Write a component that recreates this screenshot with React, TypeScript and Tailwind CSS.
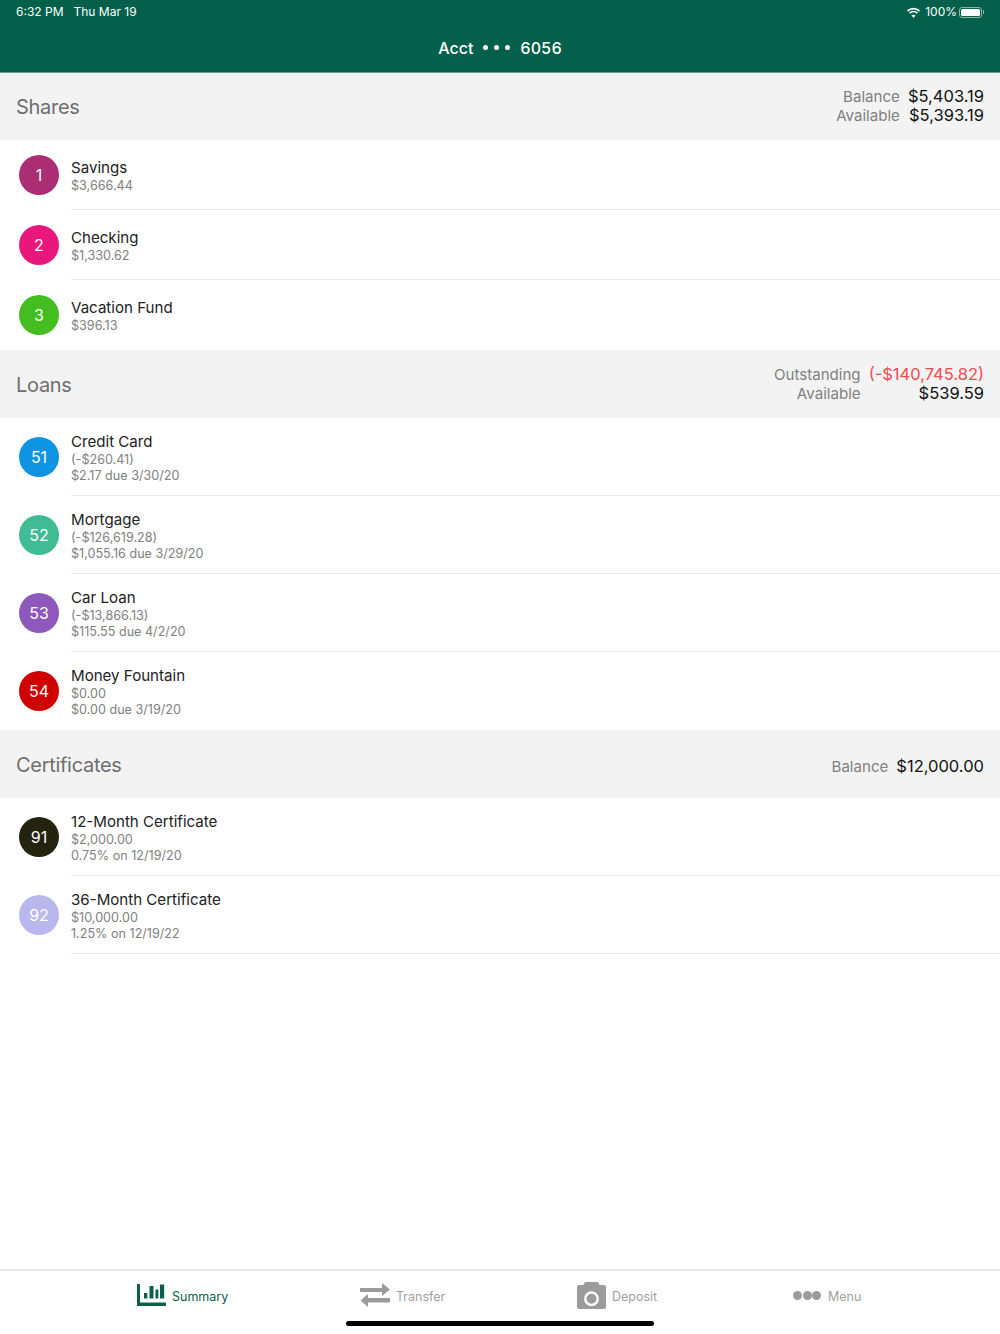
const font = { fontFamily: '"Inter", "Liberation Sans", sans-serif' };

type Account = { id: string; color: string; name: string; lines: string[]; last?: boolean };

const shares: Account[] = [
  { id: "1", color: "bg-[#ab2d73]", name: "Savings", lines: ["$3,666.44"] },
  { id: "2", color: "bg-[#e9177b]", name: "Checking", lines: ["$1,330.62"] },
  { id: "3", color: "bg-[#43bd1f]", name: "Vacation Fund", lines: ["$396.13"], last: true },
];

const loans: Account[] = [
  { id: "51", color: "bg-[#0f94e3]", name: "Credit Card", lines: ["(-$260.41)", "$2.17 due 3/30/20"] },
  { id: "52", color: "bg-[#41bb94]", name: "Mortgage", lines: ["(-$126,619.28)", "$1,055.16 due 3/29/20"] },
  { id: "53", color: "bg-[#8e58bd]", name: "Car Loan", lines: ["(-$13,866.13)", "$115.55 due 4/2/20"] },
  { id: "54", color: "bg-[#d00000]", name: "Money Fountain", lines: ["$0.00", "$0.00 due 3/19/20"], last: true },
];

const certificates: Account[] = [
  { id: "91", color: "bg-[#23230f]", name: "12-Month Certificate", lines: ["$2,000.00", "0.75% on 12/19/20"] },
  { id: "92", color: "bg-[#b9b8ee]", name: "36-Month Certificate", lines: ["$10,000.00", "1.25% on 12/19/22"] },
];

const Row = ({ a }: { a: Account }) => (
  <div className={`flex items-center pl-[19px] ${a.lines.length > 1 ? "h-[78px]" : "h-[70px]"}`}>
    <div
      className={`${a.color} w-10 h-10 rounded-full text-white flex items-center justify-center text-[16px] shrink-0`}
    >
      {a.id}
    </div>
    <div
      className={`ml-3 flex-1 h-full pt-px flex flex-col justify-center ${
        a.last ? "" : "border-b border-[#ebebeb]"
      }`}
    >
      <div className="text-[15.1px] leading-[21px] text-[#222222]">{a.name}</div>
      {a.lines.map((l) => (
        <div key={l} className="text-[12.6px] leading-[16px] text-[#808080]">
          {l}
        </div>
      ))}
    </div>
  </div>
);

const Section = ({ title, children }: { title: string; children: React.ReactNode }) => (
  <div className="h-[67px] bg-[#f3f3f3] flex items-center justify-between px-4">
    <div className="text-[20px] tracking-[-0.3px] text-[#6e6e6e]">{title}</div>
    <div className="text-[16.5px] leading-[19px] pb-[2px]">{children}</div>
  </div>
);

const Stat = ({ label, value, red }: { label: string; value: string; red?: boolean }) => (
  <>
    <div className="text-right text-[15.1px] text-[#808080]">{label}</div>
    <div className={`text-right ${red ? "text-[#f04a4f]" : "text-[#111111]"}`}>{value}</div>
  </>
);

const Tab = ({
  icon,
  label,
  active,
  className,
}: {
  icon: React.ReactNode;
  label: string;
  active?: boolean;
  className: string;
}) => (
  <div className={`flex items-center gap-[6px] absolute top-0 h-[48px] ${className}`}>
    {icon}
    <span className={`text-[12.5px] pt-[4px] ${active ? "text-[#0a6049]" : "text-[#a0a0a0]"}`}>{label}</span>
  </div>
);

export default function App() {
  return (
    <div className="w-[1000px] h-[1334px] bg-white flex flex-col overflow-hidden" style={font}>
      <div className="h-[73px] bg-[#04604a] border-b border-[#6d9c8f] flex flex-col text-white shrink-0">
        <div className="h-6 px-4 flex items-center justify-between text-[12px]">
          <div className="flex gap-[10px]">
            <span>6:32 PM</span>
            <span>Thu Mar 19</span>
          </div>
          <div className="flex items-center">
            <svg width="15" height="11" viewBox="0 0 14 11" fill="none" stroke="white" strokeWidth="1.7">
              <path d="M1 4 C4.5 0.8 9.5 0.8 13 4" />
              <path d="M3.2 6.2 C5.4 4.2 8.6 4.2 10.8 6.2" />
              <path d="M7 10.8 L4.9 8.4 C6.1 7.4 7.9 7.4 9.1 8.4 Z" fill="white" stroke="none" />
            </svg>
            <span className="ml-[4px]">100%</span>
            <div className="w-[23px] h-[11px] rounded-[3px] border border-[#8fb5aa] p-[1px] ml-[2px]">
              <div className="w-full h-full bg-white rounded-[1.5px]" />
            </div>
            <div className="w-[1px] h-1 bg-[#8fb5aa] ml-px" />
          </div>
        </div>
        <div className="flex-1 flex items-center justify-center text-[16px] font-medium tabular-nums pb-px">
          <span>Acct</span>
          <span className="flex gap-[6px] mx-[10px] items-center">
            <span className="w-[5px] h-[5px] rounded-full bg-white" />
            <span className="w-[5px] h-[5px] rounded-full bg-white" />
            <span className="w-[5px] h-[5px] rounded-full bg-white" />
          </span>
          <span>6056</span>
        </div>
      </div>

      <Section title="Shares">
        <div className="grid grid-cols-[auto_auto] gap-x-2">
          <Stat label="Balance" value="$5,403.19" />
          <Stat label="Available" value="$5,393.19" />
        </div>
      </Section>
      {shares.map((a) => (
        <Row key={a.id} a={a} />
      ))}

      <div className="h-px bg-[#f3f3f3]" />
      <Section title="Loans">
        <div className="grid grid-cols-[auto_auto] gap-x-2">
          <Stat label="Outstanding" value="(-$140,745.82)" red />
          <Stat label="Available" value="$539.59" />
        </div>
      </Section>
      {loans.map((a) => (
        <Row key={a.id} a={a} />
      ))}

      <div className="h-px bg-[#f3f3f3]" />
      <Section title="Certificates">
        <div className="grid grid-cols-[auto_auto] gap-x-2 pt-[6px]">
          <Stat label="Balance" value="$12,000.00" />
        </div>
      </Section>
      {certificates.map((a) => (
        <Row key={a.id} a={a} />
      ))}

      <div className="flex-1" />

      <div className="h-[65px] border-t-2 border-[#e9e9e9] relative shrink-0">
        <Tab
          className="left-[137px]"
          active
          label="Summary"
          icon={
            <svg width="29" height="22" viewBox="0 0 29 22" fill="#0a6049">
              <rect x="0" y="0" width="3" height="22" rx="0.6" />
              <rect x="0" y="18.5" width="29" height="3.5" rx="0.6" />
              <rect x="7" y="9" width="3.3" height="5.5" />
              <rect x="12.5" y="2" width="4" height="12.5" />
              <rect x="18.5" y="5.5" width="2.8" height="9" />
              <rect x="23" y="0.5" width="4.2" height="14" />
            </svg>
          }
        />
        <Tab
          className="left-[360px]"
          label="Transfer"
          icon={
            <svg width="30" height="24" viewBox="0 0 30 24" fill="#9b9b9b">
              <path d="M0 5 H22 V0 L30 6.5 L22 13 V9 H0 Z" />
              <path d="M30 15 H8 V11 L0.5 17.5 L8 24 V19.5 H30 Z" />
            </svg>
          }
        />
        <Tab
          className="left-[577px]"
          label="Deposit"
          icon={
            <svg width="29" height="27" viewBox="0 0 29 27" fill="#9b9b9b">
              <path d="M6.5 3 L7.5 0.8 Q7.9 0 8.8 0 H20.2 Q21.1 0 21.5 0.8 L22.5 3 H27 Q29 3 29 5 V25 Q29 27 27 27 H2 Q0 27 0 25 V5 Q0 3 2 3 Z" />
              <circle cx="14.5" cy="16.7" r="6.2" fill="none" stroke="white" strokeWidth="2.4" />
            </svg>
          }
        />
        <Tab
          className="left-[793px]"
          label="Menu"
          icon={
            <div className="flex gap-[0.5px] mr-px">
              <span className="w-[9px] h-[9px] rounded-full bg-[#9b9b9b]" />
              <span className="w-[9px] h-[9px] rounded-full bg-[#9b9b9b]" />
              <span className="w-[9px] h-[9px] rounded-full bg-[#9b9b9b]" />
            </div>
          }
        />
        <div className="absolute left-[346px] top-[50px] w-[308px] h-[5px] rounded-full bg-black" />
      </div>
    </div>
  );
}
